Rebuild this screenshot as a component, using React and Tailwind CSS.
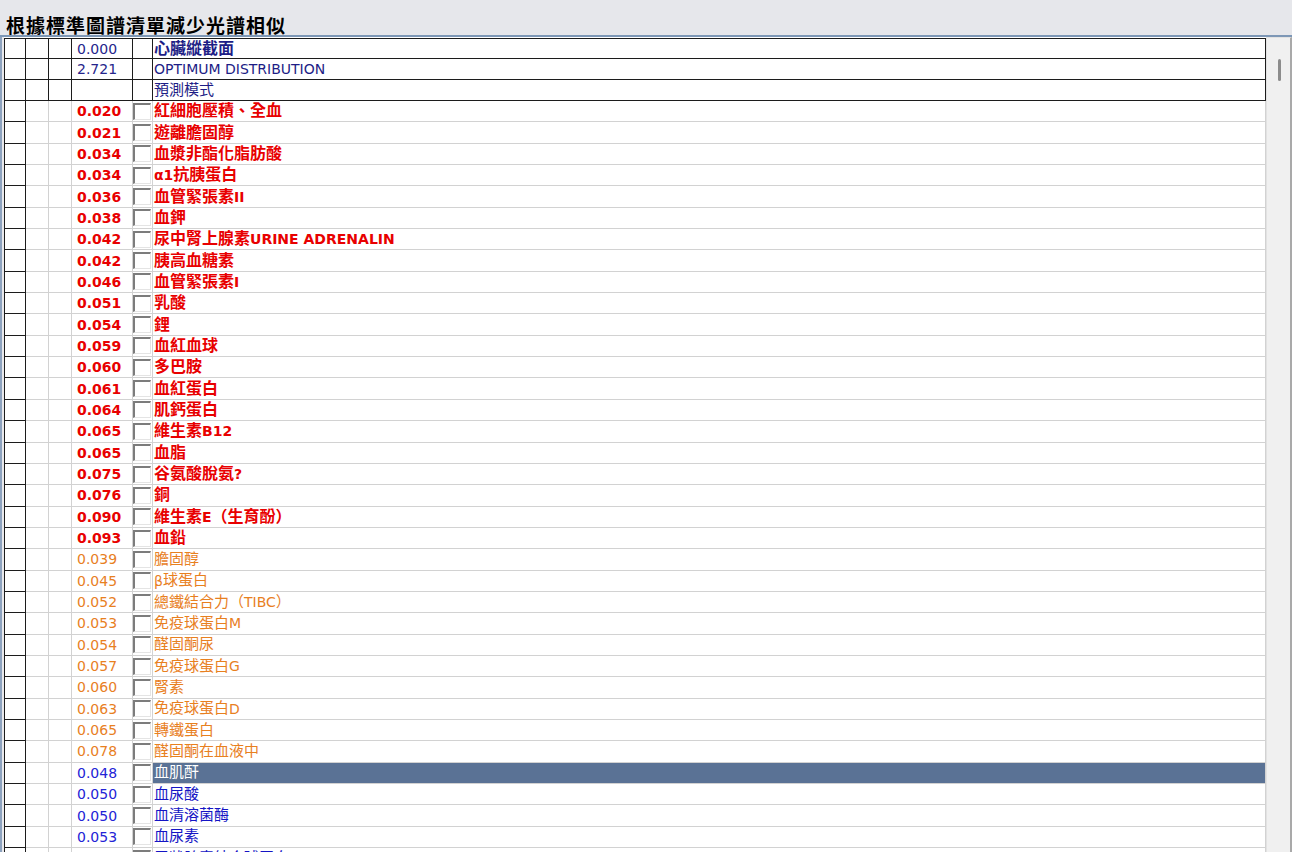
import React from "react";

const CJK = /[\u2E80-\u9FFF\u3000-\u303F\uFF00-\uFFEF]/;
const SPLIT = /[\u2E80-\u9FFF\u3000-\u303F\uFF00-\uFFEF]+|[^\u2E80-\u9FFF\u3000-\u303F\uFF00-\uFFEF]+/g;

const headRows = [
  { value: "0.000", name: "心臟縱截面", bold: true },
  { value: "2.721", name: "OPTIMUM DISTRIBUTION" },
  { value: "", name: "預測模式" },
];

const red = [
  ["0.020", "紅細胞壓積、全血"],
  ["0.021", "遊離膽固醇"],
  ["0.034", "血漿非酯化脂肪酸"],
  ["0.034", "α1抗胰蛋白"],
  ["0.036", "血管緊張素II"],
  ["0.038", "血鉀"],
  ["0.042", "尿中腎上腺素URINE ADRENALIN"],
  ["0.042", "胰高血糖素"],
  ["0.046", "血管緊張素I"],
  ["0.051", "乳酸"],
  ["0.054", "鋰"],
  ["0.059", "血紅血球"],
  ["0.060", "多巴胺"],
  ["0.061", "血紅蛋白"],
  ["0.064", "肌鈣蛋白"],
  ["0.065", "維生素B12"],
  ["0.065", "血脂"],
  ["0.075", "谷氨酸脫氨?"],
  ["0.076", "銅"],
  ["0.090", "維生素E（生育酚）"],
  ["0.093", "血鉛"],
];

const orange = [
  ["0.039", "膽固醇"],
  ["0.045", "β球蛋白"],
  ["0.052", "總鐵結合力（TIBC）"],
  ["0.053", "免疫球蛋白M"],
  ["0.054", "醛固酮尿"],
  ["0.057", "免疫球蛋白G"],
  ["0.060", "腎素"],
  ["0.063", "免疫球蛋白D"],
  ["0.065", "轉鐵蛋白"],
  ["0.078", "醛固酮在血液中"],
];

const blue = [
  ["0.048", "血肌酐", true],
  ["0.050", "血尿酸"],
  ["0.050", "血清溶菌酶"],
  ["0.053", "血尿素"],
  ["0.055", "甲狀腺素結合球蛋白"],
];

const Name = ({ text, bold }) => (
  <>
    {text.match(SPLIT).map((part, i) =>
      CJK.test(part) ? (
        <span key={i} className={bold ? "text-[16px]" : "text-[15px]"}>
          {part}
        </span>
      ) : (
        <span key={i}>{part}</span>
      )
    )}
  </>
);

const Checkbox = () => (
  <div className="w-[18px] h-[17px] bg-white border-t-2 border-l-2 border-[#7c7c7c] border-r border-b border-r-[#e4e4e4] border-b-[#e4e4e4]" />
);

const HeadRow = ({ row, first }) => (
  <div className={`flex shrink-0 h-[21px] border-b border-[#1c1c1c] ${first ? "border-t" : ""}`}>
    <div className="w-[22px] border-l border-r border-[#1c1c1c] bg-white" />
    <div className="w-[23px] border-r border-[#1c1c1c] bg-white" />
    <div className="w-[23px] border-r border-[#1c1c1c] bg-white" />
    <div className="w-[61px] border-r border-[#1c1c1c] bg-white flex items-center pl-[5px] text-[14px] text-[#25258c]">
      {row.value}
    </div>
    <div className="w-[20px] border-r border-[#1c1c1c] bg-white" />
    <div
      className={`w-[1113px] border-r border-[#1c1c1c] bg-white flex items-center pl-[1px] text-[14px] text-[#1d1d86] ${
        row.bold ? "font-bold" : ""
      }`}
    >
      <Name text={row.name} bold={row.bold} />
    </div>
  </div>
);

const DataRow = ({ value, name, tone, selected }) => {
  const valueCls =
    tone === "red"
      ? "text-[#e80000] font-bold"
      : tone === "orange"
      ? "text-[#e8801f]"
      : "text-[#2323d6]";
  const nameCls = selected
    ? "bg-[#5a7295] text-white"
    : tone === "red"
    ? "text-[#e80000] font-bold"
    : tone === "orange"
    ? "text-[#e8801f]"
    : "text-[#1414c4]";
  return (
    <div className="flex shrink-0 h-[21.35px]">
      <div className="w-[22px] border-l border-r border-b border-[#1c1c1c] bg-white" />
      <div className="w-[23px] border-r border-b border-[#d2d2d2] bg-white" />
      <div className="w-[23px] border-r border-b border-[#d2d2d2] bg-white" />
      <div className={`w-[61px] border-r border-b border-[#d2d2d2] bg-white flex items-center pl-[5px] text-[14px] ${valueCls}`}>
        {value}
      </div>
      <div className="w-[20px] border-r border-b border-[#d2d2d2] bg-white flex items-center">
        <Checkbox />
      </div>
      <div className={`w-[1113px] border-r border-b border-[#d2d2d2] flex items-center pl-[1px] text-[14px] ${selected ? "" : "bg-white"} ${nameCls}`}>
        <Name text={name} bold={tone === "red" && !selected} />
      </div>
    </div>
  );
};

export default function App() {
  return (
    <div className="w-[1292px] h-[852px] overflow-hidden bg-[#e6e7eb] font-['DejaVu_Sans','Noto_Sans_CJK_TC',sans-serif] leading-none">
      {/* Title */}
      <div className="h-[35px] flex items-end pl-[6px]">
        <h1 className="text-[19px] leading-[20px] font-bold text-black tracking-[1px] font-['Noto_Sans_CJK_TC',sans-serif]">
          根據標準圖譜清單減少光譜相似
        </h1>
      </div>

      {/* Grid */}
      <div className="flex border-t-2 border-[#7d97b6] h-[817px]">
        <div className="w-[4px] border-l-2 border-[#8ea3bf] bg-[#e9e9ec]" />
        <div className="flex flex-col w-[1262px] pt-[1px] bg-white overflow-hidden">
          {headRows.map((r, i) => (
            <HeadRow key={i} row={r} first={i === 0} />
          ))}
          {red.map(([v, n], i) => (
            <DataRow key={"r" + i} value={v} name={n} tone="red" />
          ))}
          {orange.map(([v, n], i) => (
            <DataRow key={"o" + i} value={v} name={n} tone="orange" />
          ))}
          {blue.map(([v, n, s], i) => (
            <DataRow key={"b" + i} value={v} name={n} tone="blue" selected={s} />
          ))}
        </div>

        {/* Scrollbar */}
        <div className="w-[26px] bg-[#f0f0f0] border-t border-l border-[#e2e2e2] border-r-2 border-r-[#a9a9a9] flex justify-center pt-[21px]">
          <div className="w-[3px] h-[22px] rounded-sm bg-[#8c8c8c] ml-[1px]" />
        </div>
      </div>
    </div>
  );
}
